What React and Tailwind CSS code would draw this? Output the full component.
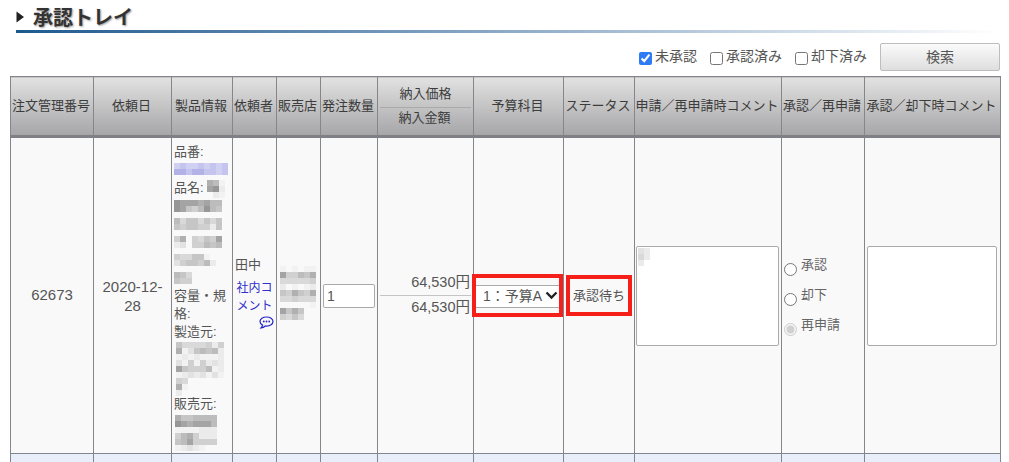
const LEVELS = { 0: "#f2f2f2", 1: "#ebebeb", 2: "#e2e2e2", 3: "#d9d9d9", 4: "#d0d0d0", 5: "#c6c6c6", 6: "#bcbcbc", 7: "#b0b0b0", 8: "#a4a4a4", 9: "#969696" };

function Mosaic({ rows, blue = false, className = "" }) {
  const w = rows[0].length * 6;
  const h = rows.length * 6;
  return (
    <svg width={w} height={h} className={className} aria-hidden="true">
      {rows.flatMap((row, y) =>
        row.split("").map((c, x) =>
          c === "." ? null : (
            <rect
              key={`${x}-${y}`}
              x={x * 6}
              y={y * 6}
              width="6"
              height="6"
              fill={blue ? (c === "a" ? "#d0d0f2" : c === "b" ? "#c4c4ee" : "#b2b2e6") : LEVELS[c]}
            />
          )
        )
      )}
    </svg>
  );
}

const thBase =
  "border border-[#85858d] border-b-[3px] border-b-[#7f7f86] bg-gradient-to-b from-[#e2e2e2] to-[#a6a6a8] font-normal text-[13px] text-[#3c3c3c] whitespace-nowrap p-0 pr-[2px] text-center";
const td = "border border-[#85858d] bg-[#f9f9f9] p-0 align-middle text-center";

function Head({ children }) {
  return <th className={thBase}>{children}</th>;
}

function Line({ children }) {
  return <div className="h-[18px] leading-[18px]">{children}</div>;
}

function ProductInfo() {
  return (
    <div className="py-[4px] pl-[2px] text-left text-[13px] text-[#555]">
      <Line>品番:</Line>
      <div className="h-[18px] pt-[2px]">
        <Mosaic blue rows={["abaababab", "ccbccbbab"]} />
      </div>
      <div className="flex h-[18px] items-start leading-[18px]">
        <span>品名:</span>
        <Mosaic className="ml-[3px] mt-[1px]" rows={["760", "891", ".10"]} />
      </div>
      <div className="h-[18px] pt-[3px]">
        <Mosaic rows={["98887866", "98546965"]} />
      </div>
      <div className="h-[18px] pt-[3px]">
        <Mosaic rows={["63553535", "54554415"]} />
      </div>
      <div className="h-[18px] pt-[3px]">
        <Mosaic rows={["47.43548", "12.44656"]} />
      </div>
      <div className="h-[18px] pt-[3px]">
        <Mosaic rows={["433550.", "24554610"]} />
      </div>
      <div className="h-[18px] pt-[3px]">
        <Mosaic rows={["653", "544"]} />
      </div>
      <Line>容量・規</Line>
      <Line>格:</Line>
      <Line>製造元:</Line>
      <div className="h-[54px] pt-[1px]">
        <Mosaic
          className="ml-[2px]"
          rows={["53333414", "70256561", "01010001", "20404121", "85444601", "01212020", "43......", "70......", "1......."]}
        />
      </div>
      <Line>販売元:</Line>
      <div className="h-[36px] pt-[2px]">
        <Mosaic
          className="ml-[1px]"
          rows={["7556666", "9878886", "0000111", "4674111", "5684444", "01210.."]}
        />
      </div>
    </div>
  );
}

function RadioRow({ label, disabled, checked }) {
  return (
    <label className="flex h-[30px] items-start text-[#666]">
      <input
        type="radio"
        name="approval"
        disabled={disabled}
        defaultChecked={checked}
        className="mt-[7px] h-[13px] w-[13px] shrink-0 accent-[#bbbbbb]"
      />
      <span className="ml-[4px] text-[13px] leading-[18px]">{label}</span>
    </label>
  );
}

function Check({ label, checked }) {
  return (
    <label className="mr-[13px] flex items-center">
      <input
        type="checkbox"
        defaultChecked={checked}
        className="mt-[2px] h-[13px] w-[13px] accent-[#2f7bf5]"
      />
      <span className="ml-[3px] -mt-[2px] text-[14px] text-[#555]">{label}</span>
    </label>
  );
}

export default function App() {
  return (
    <div
      className="h-[462px] w-[1009px] overflow-hidden bg-white"
      style={{ fontFamily: '"Liberation Sans", "Noto Sans CJK JP", sans-serif' }}
    >
      <div className="ml-[16px] mr-[9px] pt-[6px]">
        <div className="flex h-[24px] items-center">
          <svg width="9" height="12" viewBox="0 0 9 12" className="mt-[-2px]" aria-hidden="true">
            <path d="M0.5 0.5 L8 6 L0.5 11.5 Z" fill="#222" />
          </svg>
          <h1 className="ml-[8px] text-[20px] font-bold leading-[24px] text-[#333] [text-shadow:1px_1px_2px_#999]">
            承認トレイ
          </h1>
        </div>
        <div className="h-[3px] bg-gradient-to-r from-[#1b5a8e] to-[#ffffff]" />
      </div>

      <div className="mr-[9px] mt-[10px] flex h-[28px] items-center justify-end">
        <Check label="未承認" checked />
        <Check label="承認済み" />
        <Check label="却下済み" />
        <button
          type="button"
          className="h-[28px] w-[120px] rounded-[2px] border border-[#bdbdbd] bg-gradient-to-b from-[#fbfbfb] to-[#dedede] text-[14px] text-[#555]"
        >
          検索
        </button>
      </div>

      <table className="ml-[10px] mt-[5px] w-[990px] table-fixed border-collapse">
        <colgroup>
          <col className="w-[83px]" />
          <col className="w-[78px]" />
          <col className="w-[61px]" />
          <col className="w-[44px]" />
          <col className="w-[44px]" />
          <col className="w-[57px]" />
          <col className="w-[96px]" />
          <col className="w-[90px]" />
          <col className="w-[71px]" />
          <col className="w-[147px]" />
          <col className="w-[83px]" />
          <col className="w-[136px]" />
        </colgroup>
        <thead>
          <tr className="h-[60px]">
            <Head>注文管理番号</Head>
            <Head>依頼日</Head>
            <Head>製品情報</Head>
            <Head>依頼者</Head>
            <Head>販売店</Head>
            <Head>発注数量</Head>
            <Head>
              <div className="ml-[2px] border-b border-[#aaa] pb-[3px] leading-[20px]">納入価格</div>
              <div className="leading-[20px]">納入金額</div>
            </Head>
            <Head>予算科目</Head>
            <Head>ステータス</Head>
            <Head>申請／再申請時コメント</Head>
            <Head>承認／再申請</Head>
            <Head>承認／却下時コメント</Head>
          </tr>
        </thead>
        <tbody>
          <tr className="h-[317px] text-[#555]">
            <td className={`${td} text-[15px]`}>62673</td>
            <td className={`${td} text-[15px] leading-[19px]`}>
              2020-12-
              <br />
              28
            </td>
            <td className={td}>
              <ProductInfo />
            </td>
            <td className={td}>
              <div className="pb-[7px]">
                <div className="pl-[2px] text-left text-[13px] leading-[18px]">田中</div>
                <a href="#" className="mt-[5px] block text-[12px] leading-[18px] text-[#3030cc]">
                  社内コ
                  <br />
                  メント
                </a>
                <div className="mt-[1px] flex justify-end pr-[2px]">
                  <svg width="15" height="13" viewBox="0 0 15 13" aria-hidden="true">
                    <path
                      d="M7.5 1C3.9 1 1 3 1 5.5c0 1.5 1 2.8 2.6 3.6-.2 1-.8 2-1.6 2.9 1.6-.2 3.1-.9 4.2-2 .4.1.9.1 1.3.1 3.6 0 6.5-2 6.5-4.6S11.1 1 7.5 1z"
                      fill="none"
                      stroke="#2323c8"
                      strokeWidth="1.2"
                    />
                    <circle cx="4.8" cy="5.5" r=".9" fill="#2323c8" />
                    <circle cx="7.5" cy="5.5" r=".9" fill="#2323c8" />
                    <circle cx="10.2" cy="5.5" r=".9" fill="#2323c8" />
                  </svg>
                </div>
              </div>
            </td>
            <td className={td}>
              <div className="pb-[6px]">
                <Mosaic
                  className="ml-[3px]"
                  rows={["0.0.00", "844657", "333334", "1.0.01", "547547", "334333", ".....0", "8575..", "4353.."]}
                />
              </div>
            </td>
            <td className={td}>
              <input
                type="text"
                defaultValue="1"
                className="ml-[2px] block h-[24px] w-[52px] rounded-[2px] border border-[#aaa] bg-white px-[3px] text-[14px] text-[#555]"
              />
            </td>
            <td className={`${td} text-[14.5px]`}>
              <div className="pb-[3px]">
                <div className="mb-[3px] pr-[3px] text-right leading-[20px]">64,530円</div>
                <div className="mx-[2px] border-t border-[#c4c4c4] pr-[1px] pt-[1px] text-right leading-[20px]">
                  64,530円
                </div>
              </div>
            </td>
            <td className={td}>
              <div className="relative mx-[2px] h-[23px]">
                <select className="h-[23px] w-full appearance-none rounded-none border-y border-[#aaa] bg-white pl-[7px] text-[14px] text-[#555] outline-none">
                  <option>1：予算A</option>
                </select>
                <svg
                  width="13"
                  height="9"
                  viewBox="0 0 13 9"
                  className="pointer-events-none absolute right-[3px] top-[7px]"
                  aria-hidden="true"
                >
                  <path d="M1.5 1.5 L6.5 6.5 L11.5 1.5" fill="none" stroke="#222" strokeWidth="2.4" />
                </svg>
                <div className="pointer-events-none absolute -bottom-[10px] -left-[4px] -right-[2px] -top-[10px] border-4 border-[#f5201a]" />
              </div>
            </td>
            <td className={td}>
              <div className="mx-[2px] flex h-[41px] items-center justify-center border-4 border-[#f5201a] text-[13px]">
                承認待ち
              </div>
            </td>
            <td className={td}>
              <div className="relative ml-[1px] h-[100px]">
                <textarea className="block h-[100px] w-[143px] resize-none rounded-[2px] border border-[#aaa] bg-white" />
                <Mosaic className="absolute left-[2px] top-[2px]" rows={["21", "31", "1."]} />
              </div>
            </td>
            <td className={td}>
              <div className="ml-[2px] pt-[10px] text-left">
                <RadioRow label="承認" />
                <RadioRow label="却下" />
                <RadioRow label="再申請" disabled checked />
              </div>
            </td>
            <td className={td}>
              <textarea className="mx-[2px] block h-[100px] w-[130px] resize-none rounded-[2px] border border-[#aaa] bg-white" />
            </td>
          </tr>
          <tr className="h-[20px]">
            {[0, 1, 2, 3, 4, 5, 6, 7, 8, 9, 10, 11].map((i) => (
              <td key={i} className="border border-[#85858d] bg-[#e8eefa] p-0" />
            ))}
          </tr>
        </tbody>
      </table>
    </div>
  );
}
